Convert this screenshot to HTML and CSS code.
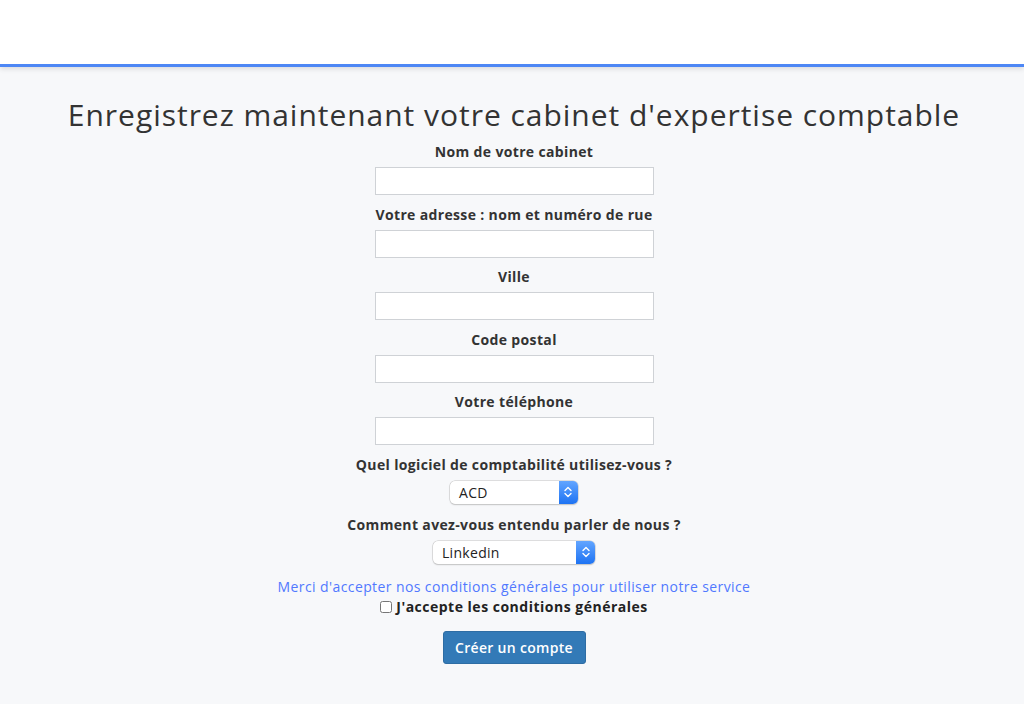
FILE: index.html
```html
<!DOCTYPE html>
<html lang="fr">
<head>
<meta charset="utf-8">
<title>Inscription</title>
<link rel="stylesheet" href="styles.css">
</head>
<body>
<header class="topbar"></header>
<main class="page">
  <h1 class="title">Enregistrez maintenant votre cabinet d'expertise comptable</h1>
  <form class="form">
    <label class="field">
      <span class="label">Nom de votre cabinet</span>
      <input class="input" type="text">
    </label>
    <label class="field">
      <span class="label">Votre adresse : nom et numéro de rue</span>
      <input class="input" type="text">
    </label>
    <label class="field">
      <span class="label">Ville</span>
      <input class="input" type="text">
    </label>
    <label class="field">
      <span class="label">Code postal</span>
      <input class="input" type="text">
    </label>
    <label class="field">
      <span class="label">Votre téléphone</span>
      <input class="input" type="text">
    </label>
    <div class="field select-field">
      <span class="label">Quel logiciel de comptabilité utilisez-vous ?</span>
      <div class="select select-acd">
        <span class="select-value">ACD</span>
        <span class="select-arrow"><svg width="8" height="12" viewBox="0 0 8 12"><path d="M1 4.5 L4 1.5 L7 4.5 M1 7.5 L4 10.5 L7 7.5" fill="none" stroke="#fff" stroke-width="1.4" stroke-linecap="round" stroke-linejoin="round"/></svg></span>
      </div>
    </div>
    <div class="field select-field">
      <span class="label">Comment avez-vous entendu parler de nous ?</span>
      <div class="select select-src">
        <span class="select-value">Linkedin</span>
        <span class="select-arrow"><svg width="8" height="12" viewBox="0 0 8 12"><path d="M1 4.5 L4 1.5 L7 4.5 M1 7.5 L4 10.5 L7 7.5" fill="none" stroke="#fff" stroke-width="1.4" stroke-linecap="round" stroke-linejoin="round"/></svg></span>
      </div>
    </div>
    <p class="notice">Merci d'accepter nos conditions générales pour utiliser notre service</p>
    <label class="accept"><input class="check" type="checkbox"> J'accepte les conditions générales</label>
    <button class="btn" type="button">Créer un compte</button>
  </form>
</main>
</body>
</html>
```

FILE: styles.css
```css
* { box-sizing: border-box; }
html, body { margin: 0; padding: 0; }
body {
  font-family: "Open Sans", "Liberation Sans", sans-serif;
  color: #333;
  background: #f7f8fa;
  height: 704px;
  overflow: hidden;
}
.topbar {
  height: 67px;
  background: #fff;
  border-bottom: 3px solid #4d87f5;
  box-shadow: 0 2px 5px rgba(0,0,0,0.12);
  position: relative;
  z-index: 1;
}
.page {
  background: #f7f8fa;
  padding-top: 30px;
  padding-left: 4px;
  display: flex;
  flex-direction: column;
  align-items: center;
}
.title {
  margin: 0;
  font-weight: 400;
  font-size: 30px;
  line-height: 36px;
  color: #333;
  letter-spacing: 0.97px;
}
.form {
  display: flex;
  flex-direction: column;
  align-items: center;
  margin-top: 10px;
}
.field {
  display: flex;
  flex-direction: column;
  align-items: center;
}
.label {
  font-weight: 700;
  font-size: 14px;
  line-height: 18px;
  letter-spacing: 0.35px;
  color: #333;
  margin-bottom: 6px;
}
.input {
  width: 279px;
  height: 28px;
  border: 1px solid #cfd2d6;
  background: #fff;
  margin: 0 0 10.5px;
  padding: 0 6px;
  font: inherit;
}
.select-field .label { margin-top: 0; margin-bottom: 7px; }
.select {
  display: flex;
  align-items: center;
  height: 23px;
  background: #fff;
  border-radius: 5px;
  box-shadow: 0 0 0 0.5px #c3c3c3, 0 1px 1.5px rgba(0,0,0,0.2);
  margin-bottom: 12px;
  font-size: 14px;
  letter-spacing: 0.3px;
}
.select-acd { width: 128px; }
.select-src { width: 162px; }
.select-value {
  flex: 1;
  padding-left: 9px;
  color: #222;
}
.select-arrow {
  width: 19px;
  height: 23px;
  display: flex;
  align-items: center;
  justify-content: center;
  background: linear-gradient(#62a5ff, #1e73f3);
  border-radius: 0 5px 5px 0;
}
.notice {
  margin: 2px 0 0;
  font-size: 14px;
  line-height: 18px;
  letter-spacing: 0.4px;
  color: #5178ff;
}
.accept {
  display: flex;
  align-items: center;
  gap: 4px;
  font-size: 14px;
  line-height: 18px;
  letter-spacing: 0.5px;
  font-weight: 700;
  margin-top: 2px;
  color: #222;
}
.check {
  margin: 0;
  width: 12px;
  height: 12px;
}
.btn {
  margin-top: 15px;
  width: 143px;
  height: 33px;
  background: #337ab7;
  color: #fff;
  border: 1px solid #2e6da4;
  border-radius: 3px;
  font-family: inherit;
  font-size: 14px;
  letter-spacing: 0.3px;
  font-weight: 600;
}
```
